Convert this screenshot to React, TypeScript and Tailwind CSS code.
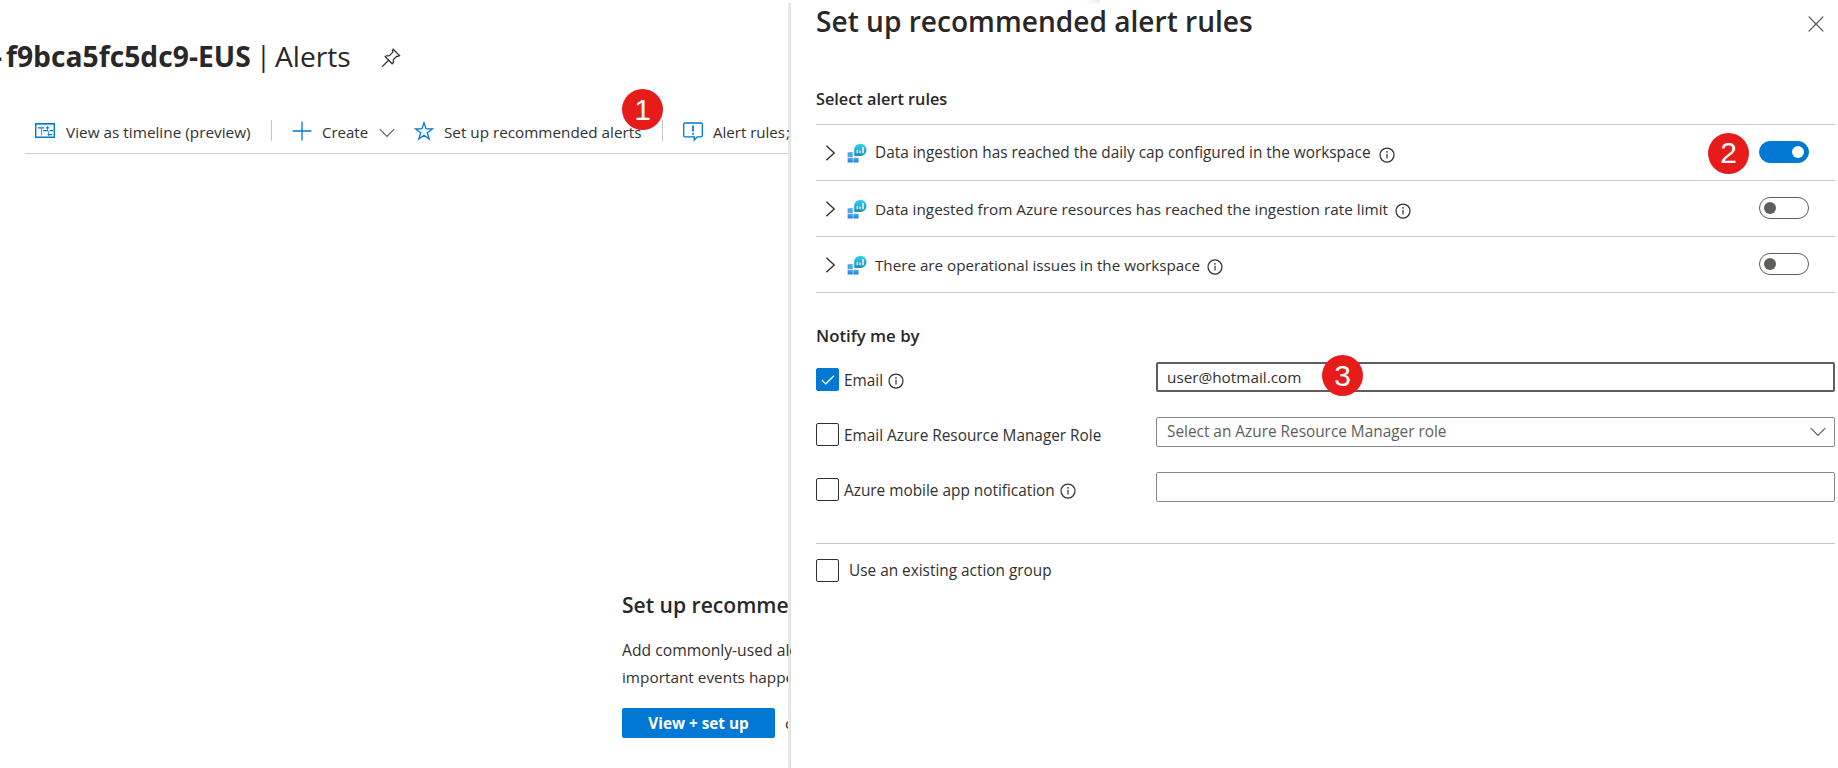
import type { ReactNode } from "react";

function Badge({ n, className }: { n: number; className: string }) {
  return (
    <span
      className={`absolute z-20 flex size-[41px] items-center justify-center rounded-full bg-[#e81b1b] font-['Liberation_Sans',Arial,sans-serif] text-[30px] leading-none text-white ${className}`}
    >
      {n}
    </span>
  );
}

function Info({ className = "" }: { className?: string }) {
  return (
    <svg className={`size-4 shrink-0 ${className}`} viewBox="0 0 16 16" fill="none">
      <circle cx="8" cy="8" r="7" stroke="#323130" strokeWidth="1.25" />
      <path d="M8 6.7V11.4" stroke="#323130" strokeWidth="1.2" />
      <circle cx="8" cy="4.9" r="0.8" fill="#323130" />
    </svg>
  );
}

function ChevronDown({ className = "" }: { className?: string }) {
  return (
    <svg className={`h-[10px] w-4 shrink-0 ${className}`} viewBox="0 0 16 10" fill="none">
      <path d="M0.8 1.2L8 8.4L15.2 1.2" stroke="#605e5c" strokeWidth="1.2" />
    </svg>
  );
}

function WorkspaceIcon() {
  return (
    <svg className="ml-[11px] size-5 shrink-0" viewBox="0 0 20 20">
      <defs>
        <linearGradient id="bubble" x1="0" y1="0" x2="0" y2="1">
          <stop offset="0" stopColor="#32d4f5" />
          <stop offset="1" stopColor="#198ab3" />
        </linearGradient>
        <linearGradient id="tiles" x1="0" y1="0" x2="0" y2="1">
          <stop offset="0" stopColor="#50a7f0" />
          <stop offset="1" stopColor="#1a80dc" />
        </linearGradient>
      </defs>
      <path d="M0.6 9.2H5.8V14H0.6Z" fill="#4ea6ef" />
      <path d="M0.6 14.7H5.8V19.5H0.6ZM6.4 14.7H11.6V19.5H6.4Z" fill="url(#tiles)" />
      <path d="M13.4 0.7A6.15 6.15 0 1 1 13.4 13H7.2V6.9A6.2 6.2 0 0 1 13.4 0.7Z" fill="url(#bubble)" />
      <path d="M9.7 6.8H11V10.2H9.7ZM12.5 7.4H13.8V10.2H12.5ZM15.3 4H16.7V10.2H15.3Z" fill="#fff" />
    </svg>
  );
}

function Toggle({ on }: { on?: boolean }) {
  return (
    <span
      className={`mr-[26px] flex h-[22px] w-[50px] shrink-0 items-center rounded-full border px-1 ${
        on ? "justify-end border-[#0078d4] bg-[#0078d4]" : "border-[#605e5c] bg-white"
      }`}
    >
      <span className={`size-3 rounded-full ${on ? "bg-white" : "bg-[#605e5c]"}`} />
    </span>
  );
}

function Rule({ children, on, textSize, infoGap }: { children: ReactNode; on?: boolean; textSize: string; infoGap: string }) {
  return (
    <div className="flex h-14 items-center border-b border-[#c8c6c4]">
      <svg className="ml-[9px] h-4 w-[11px] shrink-0" viewBox="0 0 11 16" fill="none">
        <path d="M1.4 0.8L9.2 8L1.4 15.2" stroke="#323130" strokeWidth="1.4" />
      </svg>
      <WorkspaceIcon />
      <span className={`ml-[8px] mt-px whitespace-nowrap leading-6 ${textSize}`}>{children}</span>
      <Info className={`relative top-[2px] ${infoGap}`} />
      <span className="flex-1" />
      <span className="relative -top-px flex">
        {on && <Badge n={2} className="-left-[51px] -top-[8px]" />}
        <Toggle on={on} />
      </span>
    </div>
  );
}

function Checkbox({ checked }: { checked?: boolean }) {
  return (
    <span
      className={`flex size-[23px] shrink-0 items-center justify-center rounded-[2px] border ${
        checked ? "border-[#0078d4] bg-[#0078d4]" : "border-[#323130] bg-white"
      }`}
    >
      {checked && (
        <svg className="h-[10px] w-[14px]" viewBox="0 0 14 10" fill="none">
          <path d="M1 5L4.7 8.8L13 0.8" stroke="#fff" strokeWidth="1.2" />
        </svg>
      )}
    </span>
  );
}

function NotifyRow({ label, checked, info, children }: { label: string; checked?: boolean; info?: boolean; children: ReactNode }) {
  return (
    <div className="flex h-[30px]">
      <div className="mt-[6px] flex h-6 w-[340px] shrink-0">
        <Checkbox checked={checked} />
        <span className="ml-[5px] whitespace-nowrap text-[15.36px] leading-[25px]">{label}</span>
        {info && <Info className="ml-[5px] mt-[5px]" />}
      </div>
      {children}
    </div>
  );
}

function Toolbar() {
  return (
    <div className="ml-[25px] flex h-[42px] items-center whitespace-nowrap border-b border-[#d2d0ce] text-[15.35px]">
      <svg className="relative -top-[2px] ml-[10px] h-[15px] w-5 shrink-0" viewBox="0 0 20 15" fill="none" stroke="#0078d4">
        <path d="M0.7 0.7H19.3V14.3H0.7Z" strokeWidth="1.4" />
        <path d="M0.7 1.8H19.3" strokeWidth="0.8" opacity="0.5" />
        <path d="M3 4.9H9M11 4.9H14M14.5 7.6H18M8 7.6H13M12.8 11.6H17" strokeWidth="1.1" />
        <path d="M6.5 5V12.5M12.5 3V8M13.5 8V13" strokeWidth="1" opacity="0.7" />
      </svg>
      <span className="ml-[11px] w-[184px]">View as timeline (preview)</span>
      <span className="relative -top-[2px] ml-[21px] h-[21px] w-px bg-[#c8c6c4]" />
      <svg className="relative -top-[2px] ml-[20px] size-5 shrink-0" viewBox="0 0 20 20" stroke="#0078d4" strokeWidth="1.3">
        <path d="M10 0.6V19.4M0.6 10H19.4" />
      </svg>
      <span className="ml-[10px] w-[47px] text-[15px]">Create</span>
      <ChevronDown className="ml-[10px]" />
      <svg className="relative -top-[2px] ml-[19px] size-5 shrink-0" viewBox="0 0 20 20" fill="none" stroke="#0078d4" strokeWidth="1.3">
        <path d="M10 1.8L12.1 7.9H18.4L13.3 11.7L15.2 18L10 14.2L4.8 18L6.7 11.7L1.6 7.9H7.9Z" />
      </svg>
      <span className="relative ml-[10px] w-[197px] text-[15.25px]">
        Set up recommended alerts
        <Badge n={1} className="-top-[32px] left-[178px]" />
      </span>
      <span className="relative -top-[2px] ml-[21px] h-[21px] w-px bg-[#c8c6c4]" />
      <svg className="relative -top-px ml-[20px] h-5 w-[20px] shrink-0" viewBox="0 0 20 20" fill="none" stroke="#0078d4">
        <path d="M2 1H18A1.3 1.3 0 0 1 19.3 2.3V13.6A1.3 1.3 0 0 1 18 14.9H14.2L11.3 18V14.9H2A1.3 1.3 0 0 1 0.7 13.6V2.3A1.3 1.3 0 0 1 2 1Z" strokeWidth="1.3" />
        <path d="M10 3.4V9.4" strokeWidth="1.7" />
        <path d="M10 11V12.8" strokeWidth="1.7" />
      </svg>
      <span className="relative z-10 ml-[10px] w-[78px] overflow-hidden text-[15.05px]">
        Alert rules<span className="ml-px">;</span>
      </span>
    </div>
  );
}

export default function App() {
  return (
    <div className="relative flex h-[768px] w-full overflow-hidden bg-white font-['Open_Sans','Noto_Sans',sans-serif] text-[#323130]">
      <main className="relative w-[791px] shrink-0 overflow-hidden">
        <div className="absolute bottom-0 right-0 top-[3px] w-[3px] bg-linear-to-r from-[#ececec] to-[#e0e0e0]" />
        <header className="flex h-28 items-center whitespace-nowrap text-[28.25px] text-[#292827]">
          <span className="-ml-[13px] w-[15px] text-right font-bold">-</span>
          <span className="ml-1 w-[245px] font-bold">f9bca5fc5dc9-EUS</span>
          <span className="ml-[5px] w-[15px] text-[27px]">|</span>
          <span className="ml-[4px] w-[76px] text-[28.2px]">Alerts</span>
          <svg className="ml-[30px] mt-[3px] size-[20px] shrink-0" viewBox="0 0 20 20" fill="none" stroke="#323130" strokeWidth="1.25">
            <path d="M12.2 1.2L18.6 7.6L17 8.4L15.8 8.2L12.4 11.6L12.3 14.8L11.2 15.8L4.2 8.8L5.2 7.8L8.4 7.6L11.9 4.1L11.6 2.6Z" />
            <path d="M7.6 12.2L1 18.9" />
          </svg>
        </header>
        <Toolbar />
        <section className="ml-[622px] mt-[437px] w-[169px] overflow-hidden whitespace-nowrap">
          <h2 className="w-[166px] overflow-hidden text-[21.1px] font-semibold leading-7 text-[#292827]">
            Set up recommended alert rules
          </h2>
          <p className="relative z-10 mt-[18px] text-[15.7px] leading-[27px]">
            Add commonly-used alert rules
            <span className="block w-[166px] overflow-hidden text-[15.35px]">important events happen</span>
          </p>
          <div className="mt-[17px] flex w-[166px] items-center overflow-hidden">
            <button className="h-[30px] w-[153px] shrink-0 rounded-[2px] bg-[#0078d4] text-[15.3px] font-bold text-white">
              View + set up
            </button>
            <span className="ml-[10px] text-[15.3px]">or</span>
          </div>
        </section>
      </main>

      <div className="absolute left-[1084px] top-0 h-[3px] w-4 bg-linear-to-r from-white to-[#ececec]" />

      <aside className="min-w-0 flex-1 pl-[25px] pr-[3px]">
        <div className="flex h-[42px] items-center justify-between pr-[11px]">
          <h1 className="whitespace-nowrap text-[28.1px] font-semibold leading-[42px] text-[#292827]">
            Set up recommended alert rules
          </h1>
          <svg className="mt-[5px] size-4" viewBox="0 0 16 16" stroke="#484644" strokeWidth="1.2">
            <path d="M0.7 0.7L15.3 15.3M15.3 0.7L0.7 15.3" />
          </svg>
        </div>

        <h3 className="mb-[13px] mt-[45px] text-[16.3px] font-semibold leading-6 text-[#292827]">Select alert rules</h3>
        <div className="border-t border-[#c8c6c4]">
          <Rule on textSize="text-[15.37px]" infoGap="ml-[8px]">
            Data ingestion has reached the daily cap configured in the workspace
          </Rule>
          <Rule textSize="text-[15.33px]" infoGap="ml-[7px]">
            Data ingested from Azure resources has reached the ingestion rate limit
          </Rule>
          <Rule textSize="text-[15.2px]" infoGap="ml-[7px]">
            There are operational issues in the workspace
          </Rule>
        </div>

        <h3 className="mt-[31px] text-[16.8px] font-semibold leading-6 text-[#292827]">Notify me by</h3>
        <div className="mt-[14px] flex flex-col gap-[25px]">
          <NotifyRow label="Email" checked info>
            <div className="relative flex-1 rounded-[2px] border-2 border-[#605e5c] pl-[9px] text-[15.3px] leading-[27px]">
              user@hotmail.com
              <Badge n={3} className="-top-[9px] left-[164px]" />
            </div>
          </NotifyRow>
          <NotifyRow label="Email Azure Resource Manager Role">
            <div className="flex flex-1 items-center justify-between rounded-[2px] border border-[#8a8886] pl-[10px] pr-[8px] text-[15.37px] text-[#605e5c]">
              Select an Azure Resource Manager role
              <ChevronDown />
            </div>
          </NotifyRow>
          <NotifyRow label="Azure mobile app notification" info>
            <div className="flex-1 rounded-[2px] border border-[#8a8886]" />
          </NotifyRow>
        </div>

        <div className="mt-[41px] flex border-t border-[#c8c6c4] pt-[15px]">
          <Checkbox />
          <span className="ml-[10px] text-[15.37px] leading-[23px]">Use an existing action group</span>
        </div>
      </aside>
    </div>
  );
}
